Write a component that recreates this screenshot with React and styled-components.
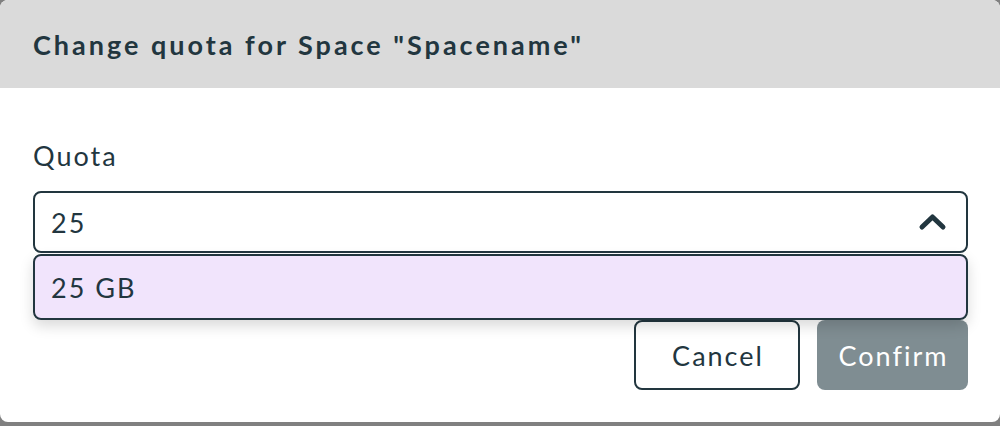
import React from 'react'
import styled, { createGlobalStyle } from 'styled-components'

const Global = createGlobalStyle`
  html, body {
    margin: 0;
    padding: 0;
    background: #808080;
    font-family: 'Lato', 'Noto Sans', sans-serif;
    color: #22363f;
  }
`

const Dialog = styled.div`
  width: 1000px;
  height: 422px;
  background: #fff;
  border-radius: 8px;
  overflow: hidden;
  display: flex;
  flex-direction: column;
`

const Header = styled.header`
  height: 88px;
  background: #dadada;
  display: flex;
  align-items: center;
  padding: 0 33px;
  box-sizing: border-box;
`

const Title = styled.h2`
  margin: 0;
  font-size: 27px;
  font-weight: 700;
  letter-spacing: 3px;
`

const Body = styled.div`
  flex: 1;
  padding: 52px 32px 32px 33px;
  display: flex;
  flex-direction: column;
  font-size: 27px;
  letter-spacing: 2px;
`

const Label = styled.label`
  line-height: 32px;
  margin-bottom: 19px;
`

const SelectWrap = styled.div`
  position: relative;
`

const Select = styled.div`
  height: 62px;
  box-sizing: border-box;
  border: 2px solid #22363f;
  border-radius: 8px;
  display: flex;
  align-items: center;
  justify-content: space-between;
  padding: 0 18px 0 16px;
`

const Menu = styled.ul`
  position: absolute;
  left: 0;
  right: 0;
  top: 63px;
  margin: 0;
  padding: 0;
  list-style: none;
  z-index: 2;
  box-shadow: 0 6px 14px rgba(0, 0, 0, 0.15);
  border-radius: 8px;
`

const Option = styled.li`
  height: 66px;
  box-sizing: border-box;
  border: 2px solid #22363f;
  border-radius: 8px;
  background: ${p => (p.active ? '#f1e4fc' : '#fff')};
  display: flex;
  align-items: center;
  padding: 0 16px;
`

const Actions = styled.div`
  display: flex;
  justify-content: flex-end;
  gap: 17px;
  margin-top: auto;
`

const Button = styled.button`
  height: 70px;
  width: ${p => p.w}px;
  box-sizing: border-box;
  border-radius: 8px;
  font-family: inherit;
  font-size: inherit;
  letter-spacing: inherit;
  padding: 0 0 0 2px;
  border: ${p => (p.primary ? 'none' : '2px solid #22363f')};
  background: ${p => (p.primary ? '#7f8d92' : '#fff')};
  color: ${p => (p.primary ? '#fff' : '#22363f')};
`

const ChevronUp = () => (
  <svg width="30" height="20" viewBox="0 0 30 20">
    <polyline
      points="4,15 14.5,5 25,15"
      fill="none"
      stroke="#22363f"
      strokeWidth="5"
      strokeLinecap="round"
      strokeLinejoin="round"
    />
  </svg>
)

export default function App() {
  return (
    <>
      <Global />
      <Dialog>
        <Header>
          <Title>Change quota for Space "Spacename"</Title>
        </Header>
        <Body>
          <Label>Quota</Label>
          <SelectWrap>
            <Select>
              <span>25</span>
              <ChevronUp />
            </Select>
            <Menu>
              <Option active>25 GB</Option>
            </Menu>
          </SelectWrap>
          <Actions>
            <Button w={166}>Cancel</Button>
            <Button w={151} primary>Confirm</Button>
          </Actions>
        </Body>
      </Dialog>
    </>
  )
}
